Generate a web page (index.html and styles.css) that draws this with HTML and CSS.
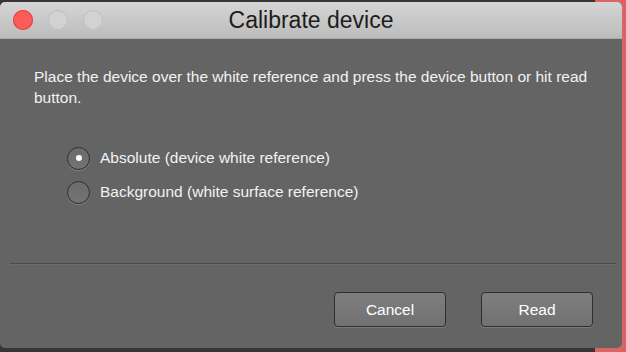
FILE: index.html
```html
<!DOCTYPE html>
<html lang="en">
<head>
    <meta charset="UTF-8">
    <meta name="viewport" content="width=device-width, initial-scale=1.0">
    <title>Calibrate device</title>
    <link rel="stylesheet" href="styles.css">
</head>
<body>
    <div class="window">
        <div class="titlebar">
            <div class="lights">
                <span class="light close"></span>
                <span class="light"></span>
                <span class="light"></span>
            </div>
            <div class="title">Calibrate device</div>
        </div>

        <div class="content">
            <p class="message">Place the device over the white reference and press the device button or hit read button.</p>

            <div class="options">
                <label class="option">
                    <span class="radio checked"></span>
                    Absolute (device white reference)
                </label>
                <label class="option">
                    <span class="radio"></span>
                    Background (white surface reference)
                </label>
            </div>
        </div>

        <div class="separator"></div>

        <div class="buttons">
            <button class="btn">Cancel</button>
            <button class="btn">Read</button>
        </div>
    </div>
</body>
</html>
```

FILE: styles.css
```css
body {
    margin: 0;
    padding: 2px 0 0 0;
    height: 350px;
    overflow: hidden;
    background: linear-gradient(to right, #353535 95%, #d96565 95%);
    font-family: "Liberation Sans", Arial, sans-serif;
}

.window {
    width: 622px;
    height: 346px;
    border-radius: 5px;
    overflow: hidden;
    background-color: #646464;
    display: flex;
    flex-direction: column;
}

.titlebar {
    height: 36px;
    flex-shrink: 0;
    position: relative;
    display: flex;
    align-items: center;
    justify-content: center;
    background: linear-gradient(to bottom, #d6d5d6, #bdbcbd);
    border-bottom: 1px solid #a9a9a9;
}

.lights {
    position: absolute;
    left: 13px;
    top: 8px;
    display: flex;
    gap: 15px;
}

.light {
    width: 20px;
    height: 20px;
    border-radius: 50%;
    background-color: #d3d2d3;
    box-shadow: inset 0 0 0 1px #c0bfc0;
}

.light.close {
    background-color: #fc5b57;
    box-shadow: inset 0 0 0 1px #e2463f;
}

.title {
    font-size: 23px;
    color: #1c1c1c;
}

.content {
    padding: 27px 20px 0 34px;
    color: #f2f2f2;
    font-size: 15.5px;
}

.message {
    margin: 0;
    line-height: 21px;
}

.options {
    margin: 33px 0 0 33px;
    display: flex;
    flex-direction: column;
}

.option {
    height: 34px;
    display: flex;
    align-items: center;
    gap: 10px;
}

.radio {
    width: 21px;
    height: 21px;
    border-radius: 50%;
    border: 1px solid #2f2f2f;
    background: linear-gradient(to bottom, #6c6c6c, #737373);
    box-shadow: 0 1px 0 #7d7d7d;
    display: flex;
    align-items: center;
    justify-content: center;
}

.radio.checked::after {
    content: "";
    width: 6px;
    height: 6px;
    border-radius: 50%;
    background-color: #ffffff;
}

.separator {
    margin: 54px 6px 0 10px;
    height: 1px;
    background-color: #4b4b4b;
    border-bottom: 1px solid #6c6c6c;
}

.buttons {
    display: flex;
    justify-content: flex-end;
    gap: 35px;
    padding: 27px 29px 0 0;
}

.btn {
    width: 112px;
    height: 35px;
    border: 1px solid #2f2f2f;
    border-radius: 4px;
    background: linear-gradient(to bottom, #7e7e7e, #717171);
    box-shadow: 0 1px 0 #7a7a7a;
    color: #ffffff;
    font-family: "Liberation Sans", Arial, sans-serif;
    font-size: 15.5px;
}
```
